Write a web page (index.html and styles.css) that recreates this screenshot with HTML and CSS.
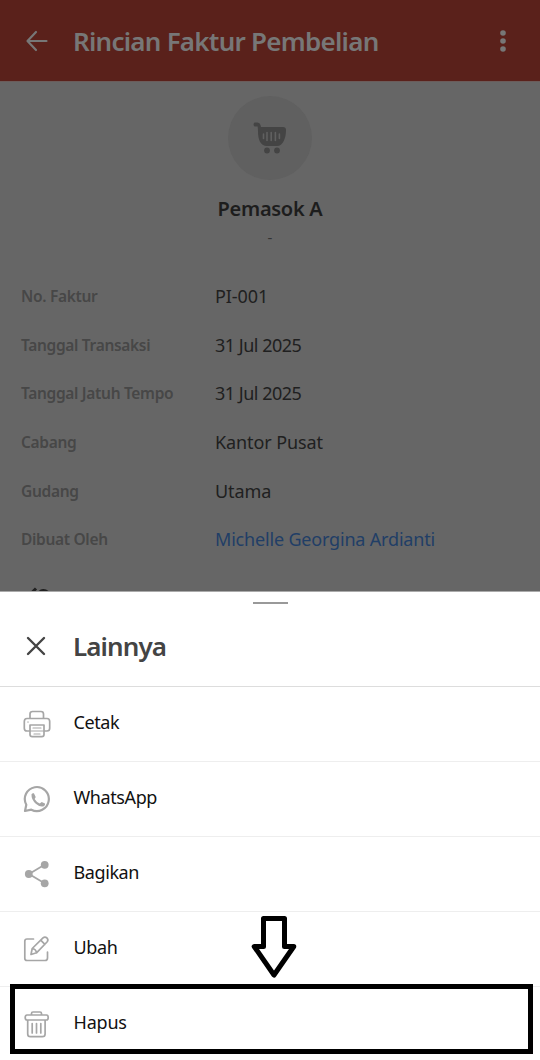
FILE: index.html
```html
<!DOCTYPE html>
<html lang="id">
<head>
<meta charset="utf-8">
<title>Rincian Faktur Pembelian</title>
<link rel="stylesheet" href="styles.css">
</head>
<body>
<div class="screen">
  <header class="appbar">
    <svg class="back" width="24" height="24" viewBox="0 0 24 24"><path d="M21.500 12H3M11 3 2.500 12l8.500 9"/></svg>
    <h1 class="appbar-title">Rincian Faktur Pembelian</h1>
    <svg class="more" width="8" height="24" viewBox="0 0 8 24"><circle cx="4" cy="4" r="2.800"/><circle cx="4" cy="12" r="2.800"/><circle cx="4" cy="20" r="2.800"/></svg>
  </header>
  <main class="invoice">
    <div class="avatar">
      <svg width="34" height="34" viewBox="0 0 34 34">
        <path class="cart-body" d="M1.500 1.500h3q2.500 0 3 2.500l.5 2h22q3 0 3 3c0 8-3 16-9 16H14c-7 0-9-7-9-15L4.700 5.500H1.500q-2-2 0-4z"/>
        <circle class="cart-body" cx="14" cy="29.500" r="2.900"/><circle class="cart-body" cx="24" cy="29.500" r="2.900"/>
        <path class="cart-slots" d="M10.500 13v4.500M14 11.500v8M18.200 11.500v8M22.400 11.500v8M26.400 13v4.500"/>
      </svg>
    </div>
    <h2 class="supplier">Pemasok A</h2>
    <p class="supplier-note">-</p>
    <dl class="details">
      <dt>No. Faktur</dt><dd>PI-001</dd>
      <dt>Tanggal Transaksi</dt><dd class="date">31 Jul 2025</dd>
      <dt>Tanggal Jatuh Tempo</dt><dd class="date">31 Jul 2025</dd>
      <dt>Cabang</dt><dd>Kantor Pusat</dd>
      <dt>Gudang</dt><dd>Utama</dd>
      <dt>Dibuat Oleh</dt><dd class="link">Michelle Georgina Ardianti</dd>
    </dl>
    <svg class="attachment" width="32" height="8" viewBox="0 0 32 8"><path d="M1.500 9 9 1.500M10 8q6-8.500 12.500-1"/></svg>
  </main>
  <section class="sheet">
    <div class="handle"></div>
    <div class="sheet-head">
      <svg class="close" width="20" height="20" viewBox="0 0 20 20"><path d="m2 2 16 16M18 2 2 18"/></svg>
      <h2 class="sheet-title">Lainnya</h2>
    </div>
    <ul class="menu">
      <li><svg class="icon" width="28" height="28" viewBox="0 0 28 28">
        <path d="M7 8.500V4q0-2.500 2.500-2.500h8.500q2.500 0 2.500 2.500v4.500M7 21H4q-2.700 0-2.700-2.700V11.500Q1.300 8.500 4 8.500h20q2.700 0 2.700 3v6.800Q26.700 21 24 21h-3M7 15h14v9.500q0 2.200-2.200 2.200H9.200Q7 26.700 7 24.500V15z"/>
        <path class="fine" d="M4.700 12h.6M10 18h8M7.500 21h13M11 24h6"/></svg><span>Cetak</span></li>
      <li><svg class="icon" width="28" height="28" viewBox="0 0 28 28">
        <path class="thick" d="M2 26l1.300-6.200A12 12 0 1 1 8.300 24.700z"/>
        <path class="solid" d="M8.500 9.300q1-1.600 2.400-1l1.700 3.400q.2.800-1 2.300 2 3.400 5.200 4.500l1.900-1.500 3.300 1.500q.5 1.700-1.200 2.700-3.400 1.500-8-2.500T8.500 9.300z"/></svg><span>WhatsApp</span></li>
      <li><svg class="icon" width="28" height="28" viewBox="0 0 28 28">
        <path class="link-line" d="M21.500 4.800 6 14l15.500 9.300"/><circle class="solid" cx="21.700" cy="4.800" r="3.900"/><circle class="solid" cx="5.800" cy="14" r="3.900"/><circle class="solid" cx="21.700" cy="23.300" r="3.900"/></svg><span>Bagikan</span></li>
      <li><svg class="icon" width="28" height="28" viewBox="0 0 28 28">
        <path d="M10.500 4H4Q1.800 4 1.800 6.200v17Q1.800 25.500 4 25.500h18q2.500 0 2.500-2.500v-6"/>
        <path d="m8 19.500 1.200-6L20 2.800q2-1.600 4 .2 1.800 2 0 4L13.500 17.800zM9.200 13.500q3.700.5 4.300 4.300M17.700 5.200l4.200 4.200"/></svg><span>Ubah</span></li>
      <li><svg class="icon bin" width="28" height="28" viewBox="0 0 28 28">
        <path d="M8.500 5V3.500Q8.500 2 10 2h7q1.500 0 1.500 1.500V5M4 5h19.500q1.700 0 1.700 2.500T23.500 10H4Q2.200 10 2.200 7.500T4 5zM4.700 10.500V24q0 2.700 2.700 2.700h12q2.700 0 2.700-2.700V10.500M9.200 13.500V23M13.500 13.500V23M17.800 13.500V23"/></svg><span>Hapus</span></li>
    </ul>
  </section>
  <div class="highlight"></div>
  <svg class="pointer" width="48" height="64" viewBox="0 0 48 64"><path d="M13.500 3.500h21v28h9.300L24 60 4.200 31.500h9.300z"/></svg>
</div>
</body>
</html>
```
FILE: styles.css
```css
* { box-sizing: border-box; }
body { margin: 0; font-family: "Noto Sans", "Open Sans", sans-serif; }
.screen { position: relative; width: 540px; height: 1060px; overflow: hidden; background: #fff; display: flex; flex-direction: column; }
h1, h2, p, dl, dd, ul { margin: 0; padding: 0; }
svg { display: block; flex: none; }
.appbar { height: 81px; flex: none; display: flex; align-items: center; padding: 0 33px 0 25px; background: #5a211b; color: #777; }
.back { fill: none; stroke: #777; stroke-width: 2.200; stroke-linecap: round; stroke-linejoin: round; }
.appbar-title { flex: 1; margin-left: 24px; font-size: 26px; font-weight: 600; letter-spacing: -.75px; line-height: 34px; white-space: nowrap; }
.more { fill: #777; }
.invoice { height: 510px; flex: none; overflow: hidden; background: #666; display: flex; flex-direction: column; align-items: center; padding-top: 14px; border-top: 1px solid #6c5c5a; }
.avatar { width: 84px; height: 84px; border-radius: 50%; background: #606060; display: flex; align-items: center; justify-content: center; flex: none; }
.cart-body { fill: #444; }
.cart-slots { stroke: #606060; stroke-width: 1.600; stroke-linecap: round; }
.supplier { margin-top: 15px; font-size: 20px; line-height: 28px; font-weight: 600; letter-spacing: -.3px; color: #1d1d1d; }
.supplier-note { font-size: 15px; line-height: 20px; margin-top: 4px; color: #333; }
.details { width: 100%; flex: none; margin-top: 25px; padding-left: 21px; display: grid; grid-template-columns: 194px 1fr; grid-auto-rows: 48.600px; align-items: center; white-space: nowrap; }
dt { font-size: 15.500px; font-weight: 600; letter-spacing: -.32px; color: #474747; }
dd { font-size: 18px; letter-spacing: -.1px; color: #202020; }
.details .date { letter-spacing: -.5px; }
.details .link { letter-spacing: -.18px; color: #213e66; }
.attachment { align-self: flex-start; margin: 23px 0 0 27px; fill: none; stroke: #202020; stroke-width: 3; }
.sheet { flex: 1; background: #fff; border-top: 1px solid #aaa; display: flex; flex-direction: column; align-items: center; }
.handle { width: 35px; height: 2px; margin-top: 10px; background: #999; flex: none; }
.sheet-head { width: 100%; height: 83px; flex: none; display: flex; align-items: center; padding: 1px 26px 0; border-bottom: 1px solid #ddd; }
.close { fill: none; stroke: #444; stroke-width: 2.400; stroke-linecap: round; }
.sheet-title { margin-left: 27px; padding-top: 1px; font-size: 26px; line-height: 34px; font-weight: 600; letter-spacing: -.9px; color: #444; }
.menu { width: 100%; list-style: none; }
.menu li { height: 75px; display: flex; align-items: center; padding: 0 23px; border-bottom: 1px solid #eee; font-size: 18px; letter-spacing: -.4px; color: #111; }
.menu li:last-child { border-bottom: 0; letter-spacing: -.2px; }
.menu span { margin-left: 22.500px; padding-bottom: 4px; }
.menu li:last-child span { padding-bottom: 5px; }
.icon { fill: none; stroke: #a6a6a6; stroke-width: 1.700; stroke-linecap: round; stroke-linejoin: round; }
.icon.bin { margin-bottom: 2px; }
.icon .fine { stroke-width: 1.200; }
.icon .thick { stroke-width: 2.200; }
.icon .link-line { stroke-width: 1.800; }
.icon .solid { fill: #a6a6a6; stroke: none; }
.highlight { position: absolute; left: 10px; top: 984px; width: 523px; height: 70px; border: 5px solid #000; }
.pointer { position: absolute; left: 250px; top: 915px; fill: #fff; stroke: #000; stroke-width: 5; stroke-linejoin: round; }
```
